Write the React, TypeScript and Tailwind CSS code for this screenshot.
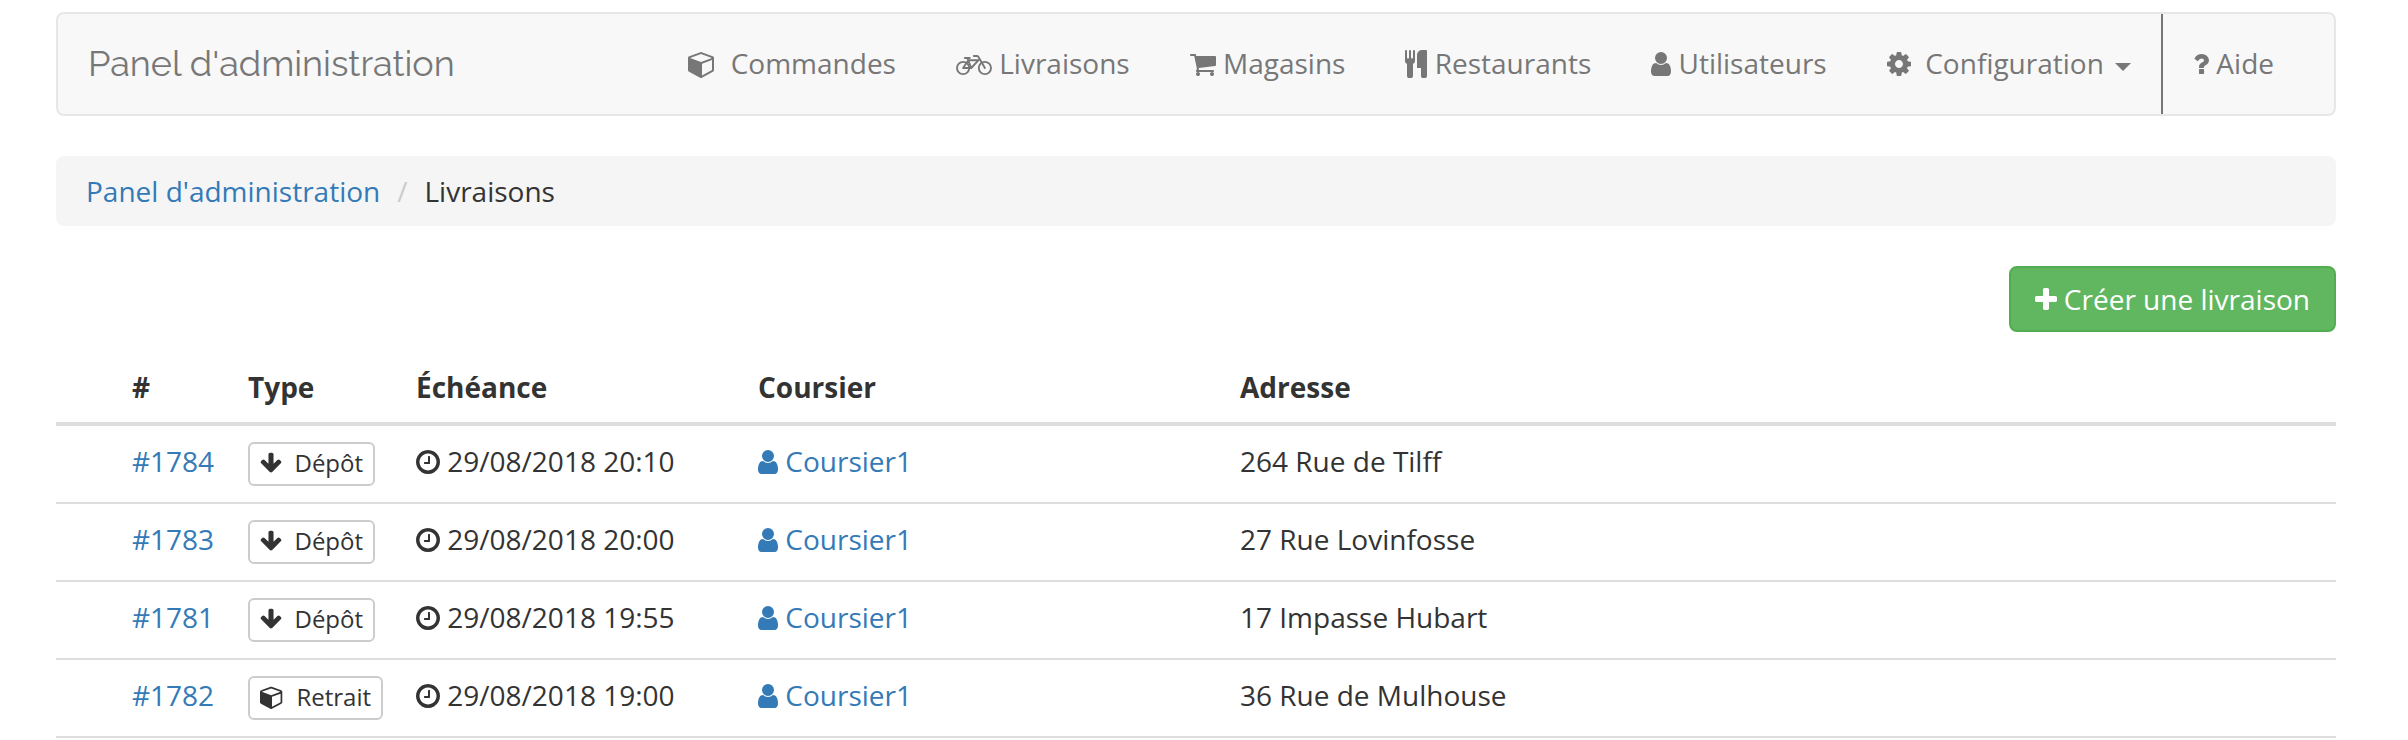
import React from "react";

type IconProps = { className?: string };

const icons = {
  cube: {
    box: "0 0 1792 1792",
    d: "M896 1629l640-349v-636l-640 233v752zm-64-865l698-254-698-254-698 254zm832-252v768q0 35-18 65t-49 47l-704 384q-28 16-61 16t-61-16l-704-384q-31-17-49-47t-18-65v-768q0-40 23-73t61-47l704-256q22-8 44-8t44 8l704 256q38 14 61 47t23 73z",
  },
  cart: {
    box: "64 0 1664 1792",
    d: "M704 1536q0 52-38 90t-90 38-90-38-38-90 38-90 90-38 90 38 38 90zm896 0q0 52-38 90t-90 38-90-38-38-90 38-90 90-38 90 38 38 90zm128-1088v512q0 24-16.5 42.5t-40.5 21.5l-1044 122q13 60 13 70 0 16-24 64h920q26 0 45 19t19 45-19 45-45 19h-1024q-26 0-45-19t-19-45q0-11 8-31.5t16-36 21.5-40 15.5-29.5l-177-823h-204q-26 0-45-19t-19-45 19-45 45-19h256q16 0 28.5 6.5t19.5 15.5 13 24.5 8 26 5.5 29.5 4.5 26h1201q26 0 45 19t19 45z",
  },
  cutlery: {
    box: "192 0 1408 1792",
    d: "M832 64v640q0 61-35.5 111t-92.5 70v779q0 52-38 90t-90 38h-128q-52 0-90-38t-38-90v-779q-57-20-92.5-70t-35.5-111v-640q0-26 19-45t45-19 45 19 19 45v416q0 26 19 45t45 19 45-19 19-45v-416q0-26 19-45t45-19 45 19 19 45v416q0 26 19 45t45 19 45-19 19-45v-416q0-26 19-45t45-19 45 19 19 45zm768 0v1600q0 52-38 90t-90 38h-128q-52 0-90-38t-38-90v-512h-224q-13 0-22.5-9.5t-9.5-22.5v-800q0-132 94-226t226-94h256q26 0 45 19t19 45z",
  },
  user: {
    box: "256 0 1280 1792",
    d: "M1536 1399q0 109-62.5 187t-150.5 78h-854q-88 0-150.5-78t-62.5-187q0-85 8.5-160.5t31.5-152 58.5-131 94-89 134.5-34.5q131 128 313 128t313-128q76 0 134.5 34.5t94 89 58.5 131 31.5 152 8.5 160.5zm-256-887q0 159-112.5 271.5t-271.5 112.5-271.5-112.5-112.5-271.5 112.5-271.5 271.5-112.5 271.5 112.5 112.5 271.5z",
  },
  cog: {
    box: "128 0 1536 1792",
    d: "M1152 896q0-106-75-181t-181-75-181 75-75 181 75 181 181 75 181-75 75-181zm512-109v222q0 12-8 23t-20 13l-185 28q-19 54-39 91 35 50 107 138 10 12 10 25t-9 23q-27 37-99 108t-94 71q-12 0-26-9l-138-108q-44 23-91 38-16 136-29 186-7 28-36 28h-222q-14 0-24.5-8.5t-11.5-21.5l-28-184q-49-16-90-37l-141 107q-10 9-25 9-14 0-25-11-126-114-165-168-7-10-7-23 0-12 8-23 15-21 51-66.5t54-70.5q-27-50-41-99l-183-27q-13-2-21-12.5t-8-23.5v-222q0-12 8-23t19-13l186-28q14-46 39-92-40-57-107-138-10-12-10-24 0-10 9-23 26-36 98.5-107.5t94.5-71.5q13 0 26 10l138 107q44-23 91-38 16-136 29-186 7-28 36-28h222q14 0 24.5 8.5t11.5 21.5l28 184q49 16 90 37l142-107q9-9 24-9 13 0 25 10 129 119 165 170 7 8 7 22 0 12-8 23-15 21-51 66.5t-54 70.5q26 50 41 98l183 28q13 2 21 12.5t8 23.5z",
  },
  question: {
    box: "384 0 1024 1792",
    d: "M1088 1256v240q0 16-12 28t-28 12h-240q-16 0-28-12t-12-28v-240q0-16 12-28t28-12h240q16 0 28 12t12 28zm316-600q0 54-15.5 101t-35 76.5-55 59.5-57.5 43.5-61 35.5q-41 23-68.5 65t-27.5 67q0 17-12 32.5t-28 15.5h-240q-15 0-25.5-18.5t-10.5-37.5v-45q0-83 65-156.5t143-108.5q59-27 84-56t25-76q0-42-46.5-74t-107.5-32q-65 0-108 29-35 25-107 115-13 16-31 16-12 0-25-8l-164-125q-13-10-15.5-25t5.5-28q160-266 464-266 80 0 161 31t146 83 106 127.5 41 158.5z",
  },
  plus: {
    box: "192 0 1408 1792",
    d: "M1600 736v192q0 40-28 68t-68 28h-416v416q0 40-28 68t-68 28h-192q-40 0-68-28t-28-68v-416h-416q-40 0-68-28t-28-68v-192q0-40 28-68t68-28h416v-416q0-40 28-68t68-28h192q40 0 68 28t28 68v416h416q40 0 68 28t28 68z",
  },
  arrowDown: {
    box: "64 0 1664 1792",
    d: "M1675 832q0 53-37 90l-651 652q-39 37-91 37-53 0-90-37l-651-652q-38-36-38-90 0-53 38-91l74-75q39-37 91-37 53 0 90 37l294 294v-704q0-52 38-90t90-38h128q52 0 90 38t38 90v704l294-294q37-37 90-37 52 0 91 37l75 75q37 39 37 91z",
  },
  clock: {
    box: "128 0 1536 1792",
    d: "M1024 544v448q0 14-9 23t-23 9h-320q-14 0-23-9t-9-23v-64q0-14 9-23t23-9h224v-352q0-14 9-23t23-9h64q14 0 23 9t9 23zm416 352q0-148-73-273t-198-198-273-73-273 73-198 198-73 273 73 273 198 198 273 73 273-73 198-198 73-273zm224 0q0 209-103 385.5t-279.5 279.5-385.5 103-385.5-103-279.5-279.5-103-385.5 103-385.5 279.5-279.5 385.5-103 385.5 103 279.5 279.5 103 385.5z",
  },
};

function Icon({ name, className = "" }: IconProps & { name: keyof typeof icons }) {
  return (
    <svg aria-hidden="true" viewBox={icons[name].box} fill="currentColor" className={`inline-block ${className}`}>
      <path d={icons[name].d} />
    </svg>
  );
}

function Bicycle({ className = "" }: IconProps) {
  return (
    <svg
      aria-hidden="true"
      viewBox="0 0 36 28"
      fill="none"
      stroke="currentColor"
      strokeWidth="1.9"
      strokeLinejoin="round"
      strokeLinecap="round"
      className={`inline-block ${className}`}
    >
      <circle cx="7.1" cy="18" r="6.1" />
      <circle cx="28.9" cy="18" r="6.1" />
      <path d="M7.1 18L12.4 10.200H22.500L15.300 18H7.100M15.300 18L11.300 8M8.800 8h5M17.800 6h3.200q.9 0 1.300.8L28.900 18" />
    </svg>
  );
}

const iconLg = "h-7 align-[-4px]";
const navItem = "block whitespace-pre px-[30px] pt-[30px] pb-8";

const deliveries = [
  { id: "#1784", type: "Dépôt", due: "29/08/2018 20:10", courier: "Coursier1", address: "264 Rue de Tilff" },
  { id: "#1783", type: "Dépôt", due: "29/08/2018 20:00", courier: "Coursier1", address: "27 Rue Lovinfosse" },
  { id: "#1781", type: "Dépôt", due: "29/08/2018 19:55", courier: "Coursier1", address: "17 Impasse Hubart" },
  { id: "#1782", type: "Retrait", due: "29/08/2018 19:00", courier: "Coursier1", address: "36 Rue de Mulhouse" },
];

export default function App() {
  return (
    <div className="bg-white pt-3 pr-[72px] pl-[56px] font-['Open_Sans',sans-serif] text-[28px] leading-[38px] text-[#333]">
      <nav className="mb-10 flex items-center justify-between rounded-lg border-2 border-[#e7e7e7] bg-[#f8f8f8] text-[#777]">
        <a href="#" className="pb-0.5 pl-[30px] font-['Raleway','Lato',sans-serif] text-[36px] leading-10">
          Panel d'administration
        </a>
        <ul className="mr-[30px] flex">
          <li>
            <a href="#" className={navItem}>
              <Icon name="cube" className={`${iconLg} w-7`} />
              {"\u00a0 Commandes"}
            </a>
          </li>
          <li>
            <a href="#" className={navItem}>
              <Bicycle className={`${iconLg} w-9`} />
              {" Livraisons"}
            </a>
          </li>
          <li>
            <a href="#" className={navItem}>
              <Icon name="cart" className={`${iconLg} w-[26px]`} />
              {" Magasins"}
            </a>
          </li>
          <li>
            <a href="#" className={navItem}>
              <Icon name="cutlery" className={`${iconLg} w-[22px]`} />
              {" Restaurants"}
            </a>
          </li>
          <li>
            <a href="#" className={navItem}>
              <Icon name="user" className={`${iconLg} w-5`} />
              {" Utilisateurs"}
            </a>
          </li>
          <li>
            <button type="button" aria-haspopup="menu" className={navItem}>
              <Icon name="cog" className={`${iconLg} w-6`} />
              {"\u00a0 Configuration "}
              <svg aria-hidden="true" viewBox="0 0 16 8" fill="currentColor" className="ml-1 inline-block h-2 w-4 align-middle">
                <path d="M0 0h16L8 8z" />
              </svg>
            </button>
          </li>
          <li className="border-l-2 border-[#777]">
            <a href="#" className={navItem}>
              <Icon name="question" className={`${iconLg} w-4`} />
              {" Aide"}
            </a>
          </li>
        </ul>
      </nav>

      <ol className="mb-10 flex rounded-lg bg-[#f5f5f5] px-[30px] py-4">
        <li>
          <a href="#" className="text-[#337ab7]">
            Panel d'administration
          </a>
        </li>
        <li aria-hidden="true" className="px-[17px] text-[#ccc]">
          /
        </li>
        <li>Livraisons</li>
      </ol>

      <div className="mb-5 flex justify-end">
        <a href="#" className="rounded-lg border-2 border-[#52ad50] bg-[#60b760] px-6 py-3 text-white">
          <Icon name="plus" className={`${iconLg} w-[22px]`} /> Créer une livraison
        </a>
      </div>

      <table className="w-full table-fixed border-b-2 border-[#ddd] text-left">
        <colgroup>
          <col className="w-[60px]" />
          <col className="w-[116px]" />
          <col className="w-[168px]" />
          <col className="w-[342px]" />
          <col className="w-[482px]" />
          <col />
        </colgroup>
        <thead>
          <tr className="border-b-4 border-[#ddd]">
            <th className="p-4" />
            <th className="p-4">#</th>
            <th className="p-4">Type</th>
            <th className="p-4">Échéance</th>
            <th className="p-4">Coursier</th>
            <th className="p-4">Adresse</th>
          </tr>
        </thead>
        <tbody className="divide-y-2 divide-[#ddd]">
          {deliveries.map((d) => (
            <tr key={d.id} className="align-top">
              <td className="p-4" />
              <td className="p-4">
                <a href="#" className="text-[#337ab7]">
                  {d.id}
                </a>
              </td>
              <td className="p-4">
                <button
                  type="button"
                  className="block rounded-md border-2 border-[#ccc] bg-white px-[10px] pt-px pb-[3px] text-2xl leading-9 whitespace-pre"
                >
                  {d.type === "Dépôt" ? (
                    <Icon name="arrowDown" className="h-6 w-[22px] align-[-3px]" />
                  ) : (
                    <Icon name="cube" className="h-6 w-6 align-[-3px]" />
                  )}
                  {"\u00a0 "}
                  {d.type}
                </button>
              </td>
              <td className="p-4">
                <Icon name="clock" className={`${iconLg} w-6`} /> {d.due}
              </td>
              <td className="p-4">
                <a href="#" className="text-[#337ab7]">
                  <Icon name="user" className={`${iconLg} w-5`} /> {d.courier}
                </a>
              </td>
              <td className="p-4">{d.address}</td>
            </tr>
          ))}
        </tbody>
      </table>
    </div>
  );
}
